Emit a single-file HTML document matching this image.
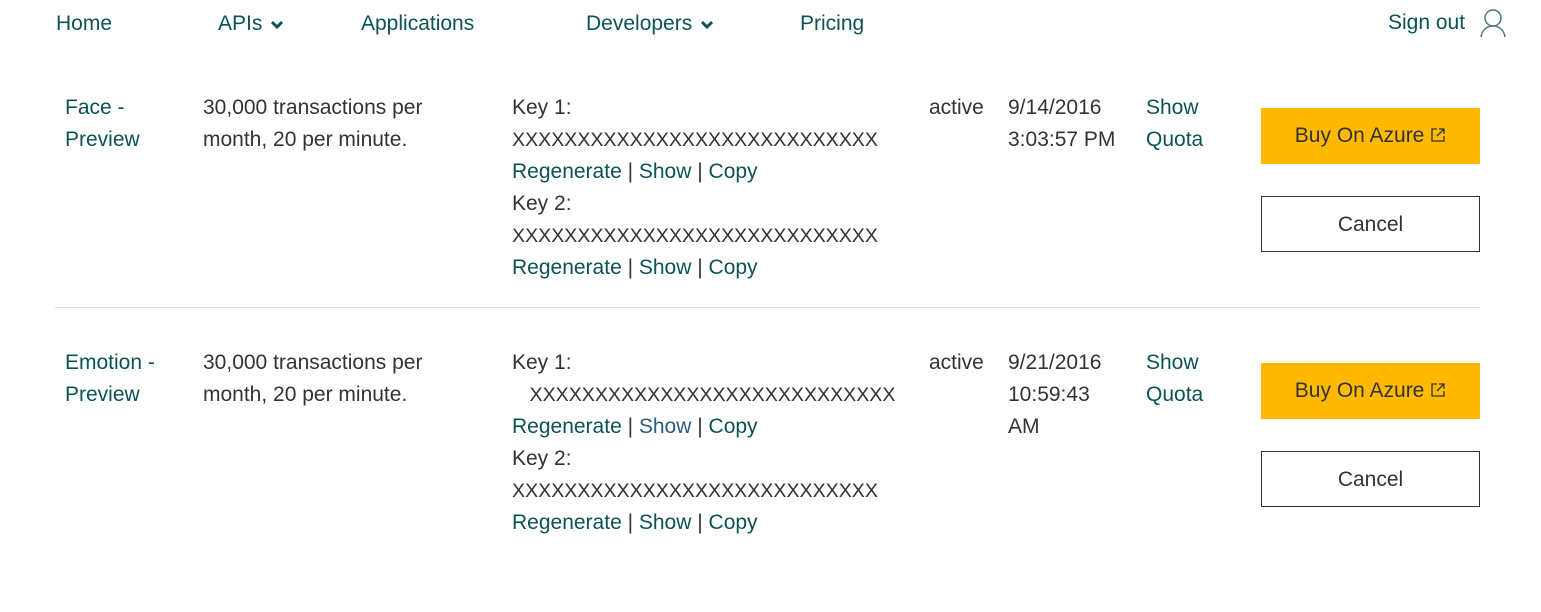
<!DOCTYPE html>
<html><head><style>
body{margin:0;width:1541px;height:612px;background:#fff;font-family:"Liberation Sans",sans-serif;font-size:21px;color:#333;position:relative;overflow:hidden}
.a{position:absolute;white-space:nowrap;line-height:32px}
.t{color:#0b5355}
.x{font-size:19.6px}
.btn{position:absolute;width:219px;height:56px;box-sizing:border-box;text-align:center;line-height:56px;font-size:21px}
.y{background:#ffb900;color:#333}
.c{border:1px solid #333;color:#333}
.hr{position:absolute;left:55px;width:1425px;height:1px;background:#ddd}
</style></head><body>
<div class="a t" style="left:56px;top:8px">Home</div>
<div class="a t" style="left:218px;top:8px">APIs <svg width="14" height="10" viewBox="0 0 14 10" style="margin-left:2px"><path d="M2 2l5 5 5-5" stroke="#0b5355" stroke-width="3" fill="none"/></svg></div>
<div class="a t" style="left:361px;top:8px">Applications</div>
<div class="a t" style="left:586px;top:8px">Developers <svg width="14" height="10" viewBox="0 0 14 10" style="margin-left:2px"><path d="M2 2l5 5 5-5" stroke="#0b5355" stroke-width="3" fill="none"/></svg></div>
<div class="a t" style="left:800px;top:8px">Pricing</div>
<div class="a t" style="left:1388px;top:7px">Sign out</div>
<svg style="position:absolute;left:1479px;top:8px" width="28" height="30" viewBox="0 0 28 30"><circle cx="14" cy="10" r="8" stroke="#4a7a7c" stroke-width="1.5" fill="none"/><path d="M2 29c1-7 6-11 12-11s11 4 12 11" stroke="#4a7a7c" stroke-width="1.5" fill="none"/></svg>

<div class="a t" style="left:65px;top:92px">Face -<br>Preview</div>
<div class="a" style="left:203px;top:92px">30,000 transactions per<br>month, 20 per minute.</div>
<div class="a" style="left:512px;top:92px">Key 1:<br><span class="x">XXXXXXXXXXXXXXXXXXXXXXXXXXXX</span><br><span class="t">Regenerate</span> | <span class="t">Show</span> | <span class="t">Copy</span><br>Key 2:<br><span class="x">XXXXXXXXXXXXXXXXXXXXXXXXXXXX</span><br><span class="t">Regenerate</span> | <span class="t">Show</span> | <span class="t">Copy</span></div>
<div class="a" style="left:929px;top:92px">active</div>
<div class="a" style="left:1008px;top:92px">9/14/2016<br>3:03:57 PM</div>
<div class="a t" style="left:1146px;top:92px">Show<br>Quota</div>
<div class="btn y" style="left:1261px;top:108px">Buy On Azure <svg width="16" height="16" viewBox="0 0 16 16" style="vertical-align:-1px"><path d="M7 2H2v12h12V9M9 2h5v5M14 2L7 9" stroke="#333" stroke-width="1.3" fill="none"/></svg></div>
<div class="btn c" style="left:1261px;top:196px">Cancel</div>
<div class="hr" style="top:307px"></div>

<div class="a t" style="left:65px;top:347px">Emotion -<br>Preview</div>
<div class="a" style="left:203px;top:347px">30,000 transactions per<br>month, 20 per minute.</div>
<div class="a" style="left:512px;top:347px">Key 1:<br>&nbsp;&nbsp;&nbsp;<span class="x">XXXXXXXXXXXXXXXXXXXXXXXXXXXX</span><br><span class="t">Regenerate</span> | <span style="color:#2a5e80">Show</span> | <span class="t">Copy</span><br>Key 2:<br><span class="x">XXXXXXXXXXXXXXXXXXXXXXXXXXXX</span><br><span class="t">Regenerate</span> | <span class="t">Show</span> | <span class="t">Copy</span></div>
<div class="a" style="left:929px;top:347px">active</div>
<div class="a" style="left:1008px;top:347px">9/21/2016<br>10:59:43<br>AM</div>
<div class="a t" style="left:1146px;top:347px">Show<br>Quota</div>
<div class="btn y" style="left:1261px;top:363px">Buy On Azure <svg width="16" height="16" viewBox="0 0 16 16" style="vertical-align:-1px"><path d="M7 2H2v12h12V9M9 2h5v5M14 2L7 9" stroke="#333" stroke-width="1.3" fill="none"/></svg></div>
<div class="btn c" style="left:1261px;top:451px">Cancel</div>
</body></html>
